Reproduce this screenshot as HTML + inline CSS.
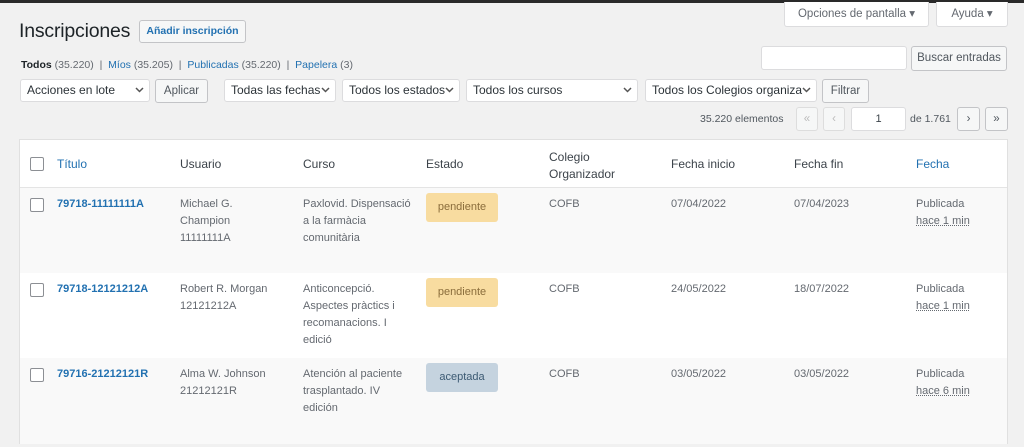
<!DOCTYPE html><html><head><meta charset="utf-8"><style>
*{box-sizing:border-box;margin:0;padding:0}
body{width:1024px;height:447px;overflow:hidden;background:#f1f1f1;font-family:"Liberation Sans",sans-serif;color:#3c434a;position:relative;font-size:12px}
.a{position:absolute;white-space:nowrap}
.box{position:absolute;background:#fff;border:1px solid #dcdcde;border-radius:3px}
.btn{position:absolute;background:#f6f7f7;border:1px solid #c3c4c7;border-radius:3px;color:#50575e;font-size:11.5px;text-align:center}
.sel{position:absolute;background:#fff;border:1px solid #dcdcde;border-radius:3px;font-size:12px;color:#2c3338;padding-left:6px;line-height:21px;overflow:hidden}
.sel svg{position:absolute;right:5px;top:7px}
.cb{position:absolute;width:14px;height:14px;border:1px solid #8c8f94;background:#fff;border-radius:2px}
.h{position:absolute;font-size:12px;color:#3c434a}
.l{color:#2271b1}
.t{position:absolute;font-size:11px;line-height:17px;color:#646970;white-space:nowrap}
.id{position:absolute;font-size:11px;font-weight:bold;color:#2271b1}
.badge{position:absolute;width:72px;height:29px;border-radius:3px;font-size:11px;text-align:center;line-height:29px}
.p{background:#f8dca0;color:#8a6d3b}.ac{background:#c5d3df;color:#3c5a73}
.u{text-decoration:underline dotted}
</style></head><body>
<div class="a" style="left:0;top:0;width:1024px;height:3px;background:#2a2a2a"></div>
<div class="box" style="left:784px;top:2px;width:145px;height:25px;border-top:none;border-radius:0 0 3px 3px;font-size:11.5px;color:#646970;line-height:24px;text-align:center">Opciones de pantalla ▾</div>
<div class="box" style="left:936px;top:2px;width:72px;height:25px;border-top:none;border-radius:0 0 3px 3px;font-size:11.5px;color:#646970;line-height:24px;text-align:center">Ayuda ▾</div>
<div class="a" style="left:19px;top:20px;font-size:19.5px;color:#1d2327;letter-spacing:-0.2px">Inscripciones</div>
<div class="a" style="left:139px;top:20px;width:107px;height:23px;border:1px solid #c3c4c7;background:#f6f7f7;border-radius:3px;color:#2271b1;font-size:10.5px;font-weight:bold;line-height:21px;text-align:center">Añadir inscripción</div>
<div class="a" style="left:21px;top:59px;font-size:10.5px;color:#646970"><b style="color:#1d2327">Todos</b> (35.220) &nbsp;|&nbsp; <span class="l">Míos</span> (35.205) &nbsp;|&nbsp; <span class="l">Publicadas</span> (35.220) &nbsp;|&nbsp; <span class="l">Papelera</span> (3)</div>
<div class="box" style="left:761px;top:46px;width:146px;height:24px"></div>
<div class="btn" style="left:911px;top:46px;width:96px;height:25px;line-height:23px">Buscar entradas</div>
<div class="sel" style="left:20px;top:79px;width:130px;height:23px">Acciones en lote<svg width="9" height="6"><path d="M1 1l3.5 3.5L8 1" fill="none" stroke="#555" stroke-width="1.5"/></svg></div>
<div class="btn" style="left:155px;top:79px;width:53px;height:24px;line-height:22px">Aplicar</div>
<div class="sel" style="left:224px;top:79px;width:112px;height:23px">Todas las fechas<svg width="9" height="6"><path d="M1 1l3.5 3.5L8 1" fill="none" stroke="#555" stroke-width="1.5"/></svg></div>
<div class="sel" style="left:342px;top:79px;width:118px;height:23px">Todos los estados<svg width="9" height="6"><path d="M1 1l3.5 3.5L8 1" fill="none" stroke="#555" stroke-width="1.5"/></svg></div>
<div class="sel" style="left:466px;top:79px;width:172px;height:23px">Todos los cursos<svg width="9" height="6"><path d="M1 1l3.5 3.5L8 1" fill="none" stroke="#555" stroke-width="1.5"/></svg></div>
<div class="sel" style="left:645px;top:79px;width:172px;height:23px">Todos los Colegios organiza<svg width="9" height="6"><path d="M1 1l3.5 3.5L8 1" fill="none" stroke="#555" stroke-width="1.5"/></svg></div>
<div class="btn" style="left:822px;top:79px;width:47px;height:24px;line-height:22px">Filtrar</div>
<div class="a" style="left:700px;top:113px;font-size:10.5px;color:#50575e">35.220 elementos</div>
<div class="btn" style="left:796px;top:107px;width:22px;height:24px;line-height:22px;color:#bbb;border-color:#ddd">«</div>
<div class="btn" style="left:823px;top:107px;width:22px;height:24px;line-height:22px;color:#bbb;border-color:#ddd">‹</div>
<div class="box" style="left:851px;top:107px;width:55px;height:24px;font-size:11px;text-align:center;line-height:22px">1</div>
<div class="a" style="left:910px;top:113px;font-size:10.5px;color:#50575e">de 1.761</div>
<div class="btn" style="left:957px;top:107px;width:23px;height:24px;line-height:22px">›</div>
<div class="btn" style="left:985px;top:107px;width:23px;height:24px;line-height:22px">»</div>

<div class="a" style="left:19px;top:139px;width:989px;height:305px;background:#fff;border:1px solid #e0e0e0"></div>
<div class="a" style="left:20px;top:187px;width:987px;height:1px;background:#e4e4e4"></div>
<div class="a" style="left:20px;top:188px;width:987px;height:85px;background:#f9f9f9"></div>
<div class="a" style="left:20px;top:358px;width:987px;height:86px;background:#f9f9f9"></div>

<div class="cb" style="left:30px;top:157px"></div>
<div class="h l" style="left:57px;top:157px">Título</div>
<div class="h" style="left:180px;top:157px">Usuario</div>
<div class="h" style="left:303px;top:157px">Curso</div>
<div class="h" style="left:426px;top:157px">Estado</div>
<div class="h" style="left:549px;top:149px;line-height:17px">Colegio<br>Organizador</div>
<div class="h" style="left:671px;top:157px">Fecha inicio</div>
<div class="h" style="left:794px;top:157px">Fecha fin</div>
<div class="h l" style="left:916px;top:157px">Fecha</div>

<div class="cb" style="left:30px;top:198px"></div>
<div class="id" style="left:57px;top:198px">79718-11111111A</div>
<div class="t" style="left:180px;top:196px">Michael G.<br>Champion<br>11111111A</div>
<div class="t" style="left:303px;top:196px">Paxlovid. Dispensació<br>a la farmàcia<br>comunitària</div>
<div class="badge p" style="left:426px;top:193px">pendiente</div>
<div class="t" style="left:549px;top:196px">COFB</div>
<div class="t" style="left:671px;top:196px">07/04/2022</div>
<div class="t" style="left:794px;top:196px">07/04/2023</div>
<div class="t" style="left:916px;top:196px">Publicada<br><span class="u">hace 1 min</span></div>

<div class="cb" style="left:30px;top:283px"></div>
<div class="id" style="left:57px;top:283px">79718-12121212A</div>
<div class="t" style="left:180px;top:281px">Robert R. Morgan<br>12121212A</div>
<div class="t" style="left:303px;top:281px">Anticoncepció.<br>Aspectes pràctics i<br>recomanacions. I<br>edició</div>
<div class="badge p" style="left:426px;top:278px">pendiente</div>
<div class="t" style="left:549px;top:281px">COFB</div>
<div class="t" style="left:671px;top:281px">24/05/2022</div>
<div class="t" style="left:794px;top:281px">18/07/2022</div>
<div class="t" style="left:916px;top:281px">Publicada<br><span class="u">hace 1 min</span></div>

<div class="cb" style="left:30px;top:368px"></div>
<div class="id" style="left:57px;top:368px">79716-21212121R</div>
<div class="t" style="left:180px;top:366px">Alma W. Johnson<br>21212121R</div>
<div class="t" style="left:303px;top:366px">Atención al paciente<br>trasplantado. IV<br>edición</div>
<div class="badge ac" style="left:426px;top:363px">aceptada</div>
<div class="t" style="left:549px;top:366px">COFB</div>
<div class="t" style="left:671px;top:366px">03/05/2022</div>
<div class="t" style="left:794px;top:366px">03/05/2022</div>
<div class="t" style="left:916px;top:366px">Publicada<br><span class="u">hace 6 min</span></div>
</body></html>
